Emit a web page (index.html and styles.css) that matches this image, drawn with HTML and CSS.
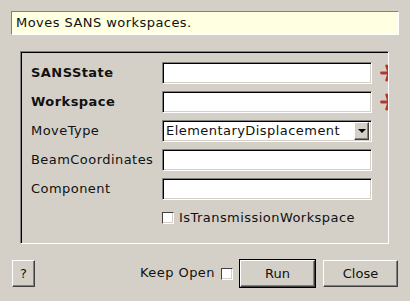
FILE: index.html
```html
<!DOCTYPE html>
<html lang="en">
<head>
  <meta charset="UTF-8">
  <title>MoveWorkspace</title>
  <link rel="stylesheet" href="styles.css">
</head>
<body>
  <div class="dialog">
    <div class="desc">Moves SANS workspaces.</div>

    <div class="group">
      <div class="form">
        <label class="req">SANSState</label>
        <input type="text" class="field">
        <span class="star">
          <svg width="18" height="18" viewBox="0 0 18 18">
            <path d="M9 9L1.5 9M9 9L6.7 16.1M9 9L6.7 1.9M9 9L15.1 13.4M9 9L15.1 4.6" />
          </svg>
        </span>

        <label class="req">Workspace</label>
        <input type="text" class="field">
        <span class="star">
          <svg width="18" height="18" viewBox="0 0 18 18">
            <path d="M9 9L1.5 9M9 9L6.7 16.1M9 9L6.7 1.9M9 9L15.1 13.4M9 9L15.1 4.6" />
          </svg>
        </span>

        <label>MoveType</label>
        <div class="combo">
          <span class="combo-text">ElementaryDisplacement</span>
          <span class="combo-btn"><span class="tri"></span></span>
        </div>
        <span></span>

        <label>BeamCoordinates</label>
        <input type="text" class="field">
        <span></span>

        <label>Component</label>
        <input type="text" class="field">
        <span></span>

        <span></span>
        <label class="checkrow"><input type="checkbox" class="check">IsTransmissionWorkspace</label>
        <span></span>
      </div>
    </div>

    <div class="footer">
      <button class="btn help">?</button>
      <span class="spacer"></span>
      <label class="keep">Keep Open<input type="checkbox" class="check"></label>
      <button class="btn run">Run</button>
      <button class="btn close">Close</button>
    </div>
  </div>
</body>
</html>
```

FILE: styles.css
```css
body {
  margin: 0;
  background: #d4d0c8;
  font-family: 'DejaVu Sans', sans-serif;
  font-size: 13px;
  letter-spacing: 0.45px;
  color: #111;
}

.dialog {
  padding: 11px;
}

.desc {
  height: 24px;
  box-sizing: border-box;
  padding-left: 4px;
  line-height: 22px;
  background: #ffffe1;
  border: 1px solid;
  border-color: #808080 #ffffff #ffffff #808080;
}

.group {
  margin: 16px 10px 0 9px;
  padding: 10px 0 14px 10px;
  border: 1px solid;
  border-color: #808080 #ffffff #ffffff #808080;
  box-shadow: inset 1px 1px 0 #000;
  overflow: hidden;
}

.form {
  display: grid;
  grid-template-columns: 131px 210px 26px;
  grid-auto-rows: 22px;
  row-gap: 7px;
  align-items: center;
}

.form label {
  line-height: 22px;
  white-space: nowrap;
}

.form .req {
  font-weight: bold;
}

.field {
  width: 210px;
  height: 22px;
  box-sizing: border-box;
  margin: 0;
  padding: 0 3px;
  background: #fff;
  border: 1px solid;
  border-color: #808080 #ffffff #ffffff #808080;
  box-shadow: inset 1px 1px 0 #000, inset -1px -1px 0 #d4d0c8;
  font: inherit;
  outline: none;
}

.star {
  padding-left: 8px;
  height: 18px;
}

.star svg {
  display: block;
  fill: none;
  stroke: #b8352b;
  stroke-width: 2.8;
  stroke-linecap: round;
}

.combo {
  display: flex;
  align-items: center;
  height: 22px;
  box-sizing: border-box;
  padding: 2px;
  background: #fff;
  border: 1px solid;
  border-color: #808080 #ffffff #ffffff #808080;
  box-shadow: inset 1px 1px 0 #000, inset -1px -1px 0 #d4d0c8;
}

.combo-text {
  flex: 1;
  padding-left: 1px;
  line-height: 18px;
  white-space: nowrap;
}

.combo-btn {
  width: 15px;
  height: 18px;
  box-sizing: border-box;
  display: flex;
  align-items: center;
  justify-content: center;
  background: #d4d0c8;
  border: 1px solid;
  border-color: #ffffff #404040 #404040 #ffffff;
  box-shadow: inset -1px -1px 0 #808080;
}

.tri {
  width: 0;
  height: 0;
  border-left: 4px solid transparent;
  border-right: 4px solid transparent;
  border-top: 4px solid #000;
}

.checkrow {
  display: flex;
  align-items: center;
  gap: 5px;
}

.check {
  appearance: none;
  width: 12px;
  height: 12px;
  margin: 0;
  box-sizing: border-box;
  background: #fff;
  border: 1px solid;
  border-color: #404040 #ffffff #ffffff #404040;
  box-shadow: inset -1px -1px 0 #d4d0c8;
}

.footer {
  display: flex;
  align-items: center;
  margin-top: 16px;
  padding: 0 1px;
}

.spacer {
  flex: 1;
}

.keep {
  display: flex;
  align-items: center;
  gap: 6px;
  margin-right: 7px;
  margin-top: -2px;
}

.keep .check {
  margin-top: 2px;
}

.btn {
  height: 27px;
  box-sizing: border-box;
  margin: 0;
  padding: 0;
  background: #d4d0c8;
  border: 1px solid;
  border-color: #ffffff #404040 #404040 #ffffff;
  box-shadow: inset -1px -1px 0 #808080;
  font: inherit;
  color: #111;
}

.help {
  width: 23px;
}

.run {
  width: 75px;
  outline: 1px solid #000;
}

.close {
  width: 75px;
  margin-left: 8px;
}
```
